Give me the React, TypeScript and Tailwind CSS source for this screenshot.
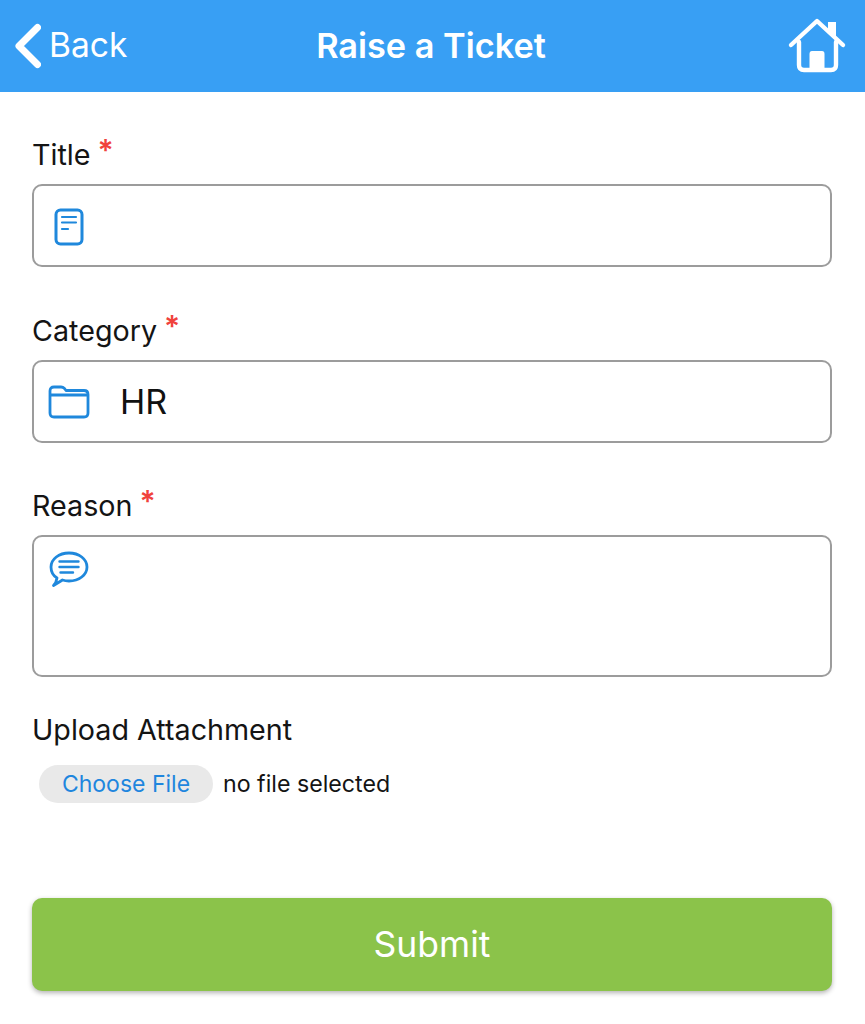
const font = { fontFamily: "Inter, 'Liberation Sans', sans-serif" };

const BackChevron = () => (
  <svg width="28" height="46" viewBox="0 0 28 46" fill="none" stroke="#fff" strokeWidth="7" strokeLinecap="round" strokeLinejoin="round">
    <path d="M24.500 4.500 L6 23 L24.500 41.500" />
  </svg>
);

const HomeIcon = () => (
  <svg width="60" height="56" viewBox="0 0 60 56" fill="none" stroke="#fff" strokeWidth="4.400" strokeLinecap="round" strokeLinejoin="round">
    <path d="M4 27 L30 3 L56 27" />
    <path d="M12 24 V47 Q12 52 17 52 H44 Q49 52 49 47 V24" />
    <path d="M41 4 H49 V20 L41 13 Z" fill="#fff" stroke="none" />
    <path d="M22.500 52 V36 Q22.500 33 25 33 H35 Q37.500 33 37.500 36 V52 Z" fill="#fff" stroke="none" />
  </svg>
);

const NoteIcon = () => (
  <svg width="32" height="40" viewBox="0 0 32 40" fill="none" stroke="#1f88dc" strokeLinecap="round">
    <rect x="3" y="3" width="26" height="34" rx="4.500" strokeWidth="3" />
    <path d="M9 10 H23 M9 15.500 H23 M9 22 H15" strokeWidth="2.200" />
  </svg>
);

const FolderIcon = () => (
  <svg width="42" height="34" viewBox="0 0 42 34" fill="none" stroke="#1f88dc" strokeWidth="2.800" strokeLinejoin="round">
    <path d="M2 6 Q2 2 6 2 H13 Q15 2 16.500 3.500 L18 5.500 H36 Q40 5.500 40 9.500 V28 Q40 32 36 32 H6 Q2 32 2 28 Z" />
    <path d="M2 10 H40" />
  </svg>
);

const ChatIcon = () => (
  <svg width="40" height="38" viewBox="0 0 40 38" fill="none" stroke="#1f88dc" strokeLinecap="round" strokeLinejoin="round">
    <path d="M20 2 C30 2 38 8 38 16 C38 24 30 30 20 30 C17.500 30 15.500 29.700 13.500 29 L4.500 34.500 C6.500 32.500 7.500 30.500 8 27 C4 24.500 2 20.500 2 16 C2 8 10 2 20 2 Z" strokeWidth="2.800" />
    <path d="M10.500 10.500 H29.500 M10.500 16 H29.500 M11.500 21.500 H24" strokeWidth="2.400" />
  </svg>
);

const Label = ({ text, required }: { text: string; required?: boolean }) => (
  <div className="h-[36px] flex items-center text-[28.700px] text-[#141414]">
    <span>{text}</span>
    {required && <span className="ml-[7px] -mt-[10px] text-[30px] font-semibold leading-none text-[#f0423c]">*</span>}
  </div>
);

export default function App() {
  return (
    <div className="min-h-[1024px] bg-white" style={font}>
      <header className="h-[92px] bg-[#389ff4] flex items-center justify-between pl-[13px] pr-[18px] text-white">
        <div className="flex items-center w-[200px] gap-[8px]">
          <BackChevron />
          <span className="text-[33.600px] -mt-[2px]">Back</span>
        </div>
        <h1 className="text-[34.300px] font-semibold -mt-[1px] ml-[2px]">Raise a Ticket</h1>
        <div className="w-[200px] flex justify-end">
          <HomeIcon />
        </div>
      </header>

      <main className="pl-[32px] pr-[33px] pt-[45px]">
        <Label text="Title" required />
        <div className="mt-[11px] mb-[46px] h-[83px] border-2 border-[#9c9c9c] rounded-[10px] flex items-center pl-[19px] pt-[3px]">
          <NoteIcon />
        </div>

        <Label text="Category" required />
        <div className="mt-[11px] mb-[45px] h-[83px] border-2 border-[#9c9c9c] rounded-[10px] flex items-center pl-[14px] gap-[30px]">
          <FolderIcon />
          <span className="text-[34px] text-[#111]">HR</span>
        </div>

        <Label text="Reason" required />
        <div className="mt-[11px] h-[142px] border-2 border-[#9c9c9c] rounded-[10px] pl-[15px] pt-[14px]">
          <ChatIcon />
        </div>

        <div className="mt-[35px]">
          <Label text="Upload Attachment" />
        </div>
        <div className="mt-[17px] pl-[7px] flex items-center gap-[10px]">
          <div className="w-[174px] h-[38px] rounded-full bg-[#e9e9e9] flex items-center justify-center text-[23px] text-[#1f86de]">
            Choose File
          </div>
          <span className="text-[23.200px] text-[#141414]">no file selected</span>
        </div>

        <button className="mt-[95px] w-full h-[93px] rounded-[10px] bg-[#8bc34a] shadow-[0_2px_5px_rgba(0,0,0,0.3)] text-white text-[35.500px]">
          Submit
        </button>
      </main>
    </div>
  );
}
